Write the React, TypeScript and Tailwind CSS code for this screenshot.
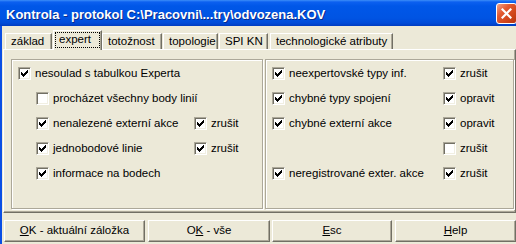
import React from "react";

const CheckMark = () => (
  <svg width="7" height="7" viewBox="0 0 7 7" shapeRendering="crispEdges" className="block">
    <path
      d="M0 2h1v3h-1zM1 3h1v3h-1zM2 4h1v3h-1zM3 3h1v3h-1zM4 2h1v3h-1zM5 1h1v3h-1zM6 0h1v3h-1z"
      fill="#000"
    />
  </svg>
);

const Box = ({ checked }: { checked: boolean }) => (
  <div className="w-[13px] h-[13px] shrink-0 bg-white border border-t-[#aca899] border-l-[#aca899] border-b-white border-r-white shadow-[inset_1px_1px_0_#716f64,inset_-1px_-1px_0_#f1efe2] flex items-center justify-center">
    {checked && <CheckMark />}
  </div>
);

const Item = ({ checked, label }: { checked: boolean; label: string }) => (
  <div className="flex items-center h-[13px]">
    <Box checked={checked} />
    <span className="ml-[4px] leading-[13px] whitespace-nowrap">{label}</span>
  </div>
);

const Tab = ({
  label,
  w,
  ml,
  selected,
}: {
  label: string;
  w: string;
  ml: string;
  selected?: boolean;
}) =>
  selected ? (
    <div
      className={`${w} ${ml} h-[20px] -mb-[1px] bg-[#ece9d8] border-t border-l border-white border-r border-r-[#716f64] shadow-[inset_-1px_0_0_#aca899] p-[1px] pb-[2px]`}
    >
      <div className="h-full border border-dotted border-black pl-[3px] leading-[13px] whitespace-nowrap">{label}</div>
    </div>
  ) : (
    <div
      className={`${w} ${ml} h-[16px] bg-[#ece9d8] border-t border-l border-white border-r border-r-[#716f64] shadow-[inset_-1px_0_0_#aca899] pl-[5px] pt-[1px] leading-[13px] whitespace-nowrap`}
    >
      {label}
    </div>
  );

const Btn = ({ w, ml, children }: { w: string; ml: string; children: React.ReactNode }) => (
  <div
    className={`${w} ${ml} h-[22px] shrink-0 flex items-center justify-center border border-t-white border-l-white border-b-[#716f64] border-r-[#716f64] shadow-[inset_-1px_-1px_0_#aca899] whitespace-nowrap`}
  >
    {children}
  </div>
);

export default function App() {
  return (
    <div className="w-[516px] h-[244px] overflow-hidden flex flex-col bg-[#ece9d8] font-['Liberation_Sans',Arial,sans-serif] text-[11.5px] text-black">
      {/* Title bar */}
      <div className="h-[26px] shrink-0 flex items-start bg-[linear-gradient(to_bottom,#3d8ef8_0px,#0c60f0_2px,#0057e8_6px,#0054e3_18px,#004bd8_23px,#003cc0_26px)]">
        <div className="pl-[6px] pt-[7px] leading-[15px] text-[13px] font-bold text-white [text-shadow:1px_1px_0_#0a2a8a] whitespace-nowrap">
          {"Kontrola - protokol C:\\Pracovni\\...try\\odvozena.KOV"}
        </div>
        <div className="ml-auto -mr-[1px] mt-[3px] w-[21px] h-[21px] shrink-0 rounded-[3px] border border-white bg-[linear-gradient(135deg,#f2a48c_0%,#e35a32_35%,#cf4419_70%,#b8350f_100%)] flex items-center justify-center">
          <svg width="11" height="11" viewBox="0 0 11 11">
            <path d="M1.5 1.5L9.5 9.5M9.5 1.5L1.5 9.5" stroke="#fff" strokeWidth="2.2" strokeLinecap="square" />
          </svg>
        </div>
      </div>

      {/* Body */}
      <div className="flex-1 flex">
        <div className="w-[2px] shrink-0 bg-[#0a4ee4]" />
        <div className="flex-1 flex flex-col">
          {/* Tabs */}
          <div className="mt-[4px] pl-[3px] flex items-end h-[19px] relative z-10">
            <Tab label="základ" w="w-[47px]" ml="ml-0" />
            <Tab label="expert" w="w-[49px]" ml="ml-[1px]" selected />
            <Tab label="totožnost" w="w-[60px]" ml="ml-0" />
            <Tab label="topologie" w="w-[55px]" ml="ml-[1px]" />
            <Tab label="SPI KN" w="w-[49px]" ml="ml-[1px]" />
            <Tab label="technologické atributy" w="w-[123px]" ml="ml-[2px]" />
          </div>

          {/* Panel */}
          <div className="ml-[1px] w-[513px] h-[164px] border border-t-white border-l-white border-r-[#716f64] border-b-[#716f64] shadow-[inset_-1px_-1px_0_#aca899] pt-[9px] pl-[7px] flex gap-[2px]">
            {/* Left group */}
            <div className="w-[252px] h-[150px] border border-[#aca899] shadow-[inset_1px_1px_0_#fff,1px_1px_0_#fff] pt-[7px] pl-[6px] flex flex-col gap-[12px]">
              <Item checked label="nesoulad s tabulkou Experta" />
              <div className="ml-[18px]">
                <Item checked={false} label="procházet všechny body linií" />
              </div>
              <div className="ml-[18px] flex">
                <div className="w-[158px]">
                  <Item checked label="nenalezené externí akce" />
                </div>
                <Item checked label="zrušit" />
              </div>
              <div className="ml-[18px] flex">
                <div className="w-[158px]">
                  <Item checked label="jednobodové linie" />
                </div>
                <Item checked label="zrušit" />
              </div>
              <div className="ml-[18px]">
                <Item checked label="informace na bodech" />
              </div>
            </div>

            {/* Right group */}
            <div className="w-[249px] h-[150px] border border-[#aca899] shadow-[inset_1px_1px_0_#fff,1px_1px_0_#fff] pt-[7px] pl-[6px] flex flex-col gap-[12px]">
              <div className="flex">
                <div className="w-[171px]">
                  <Item checked label="neexpertovské typy inf." />
                </div>
                <Item checked label="zrušit" />
              </div>
              <div className="flex">
                <div className="w-[171px]">
                  <Item checked label="chybné typy spojení" />
                </div>
                <Item checked label="opravit" />
              </div>
              <div className="flex">
                <div className="w-[171px]">
                  <Item checked label="chybné externí akce" />
                </div>
                <Item checked label="opravit" />
              </div>
              <div className="flex">
                <div className="w-[171px]" />
                <Item checked={false} label="zrušit" />
              </div>
              <div className="flex">
                <div className="w-[171px]">
                  <Item checked label="neregistrované exter. akce" />
                </div>
                <Item checked label="zrušit" />
              </div>
            </div>
          </div>

          {/* Buttons */}
          <div className="mt-[7px] flex">
            <Btn w="w-[141px]" ml="ml-[2px]">
              <span className="underline">O</span>K - aktuální záložka
            </Btn>
            <Btn w="w-[122px]" ml="ml-[3px]">
              O<span className="underline">K</span>&nbsp;- vše
            </Btn>
            <Btn w="w-[120px]" ml="ml-[2px]">
              <span className="underline">E</span>sc
            </Btn>
            <Btn w="w-[121px]" ml="ml-[3px]">
              <span className="underline">H</span>elp
            </Btn>
          </div>
        </div>
      </div>
    </div>
  );
}
